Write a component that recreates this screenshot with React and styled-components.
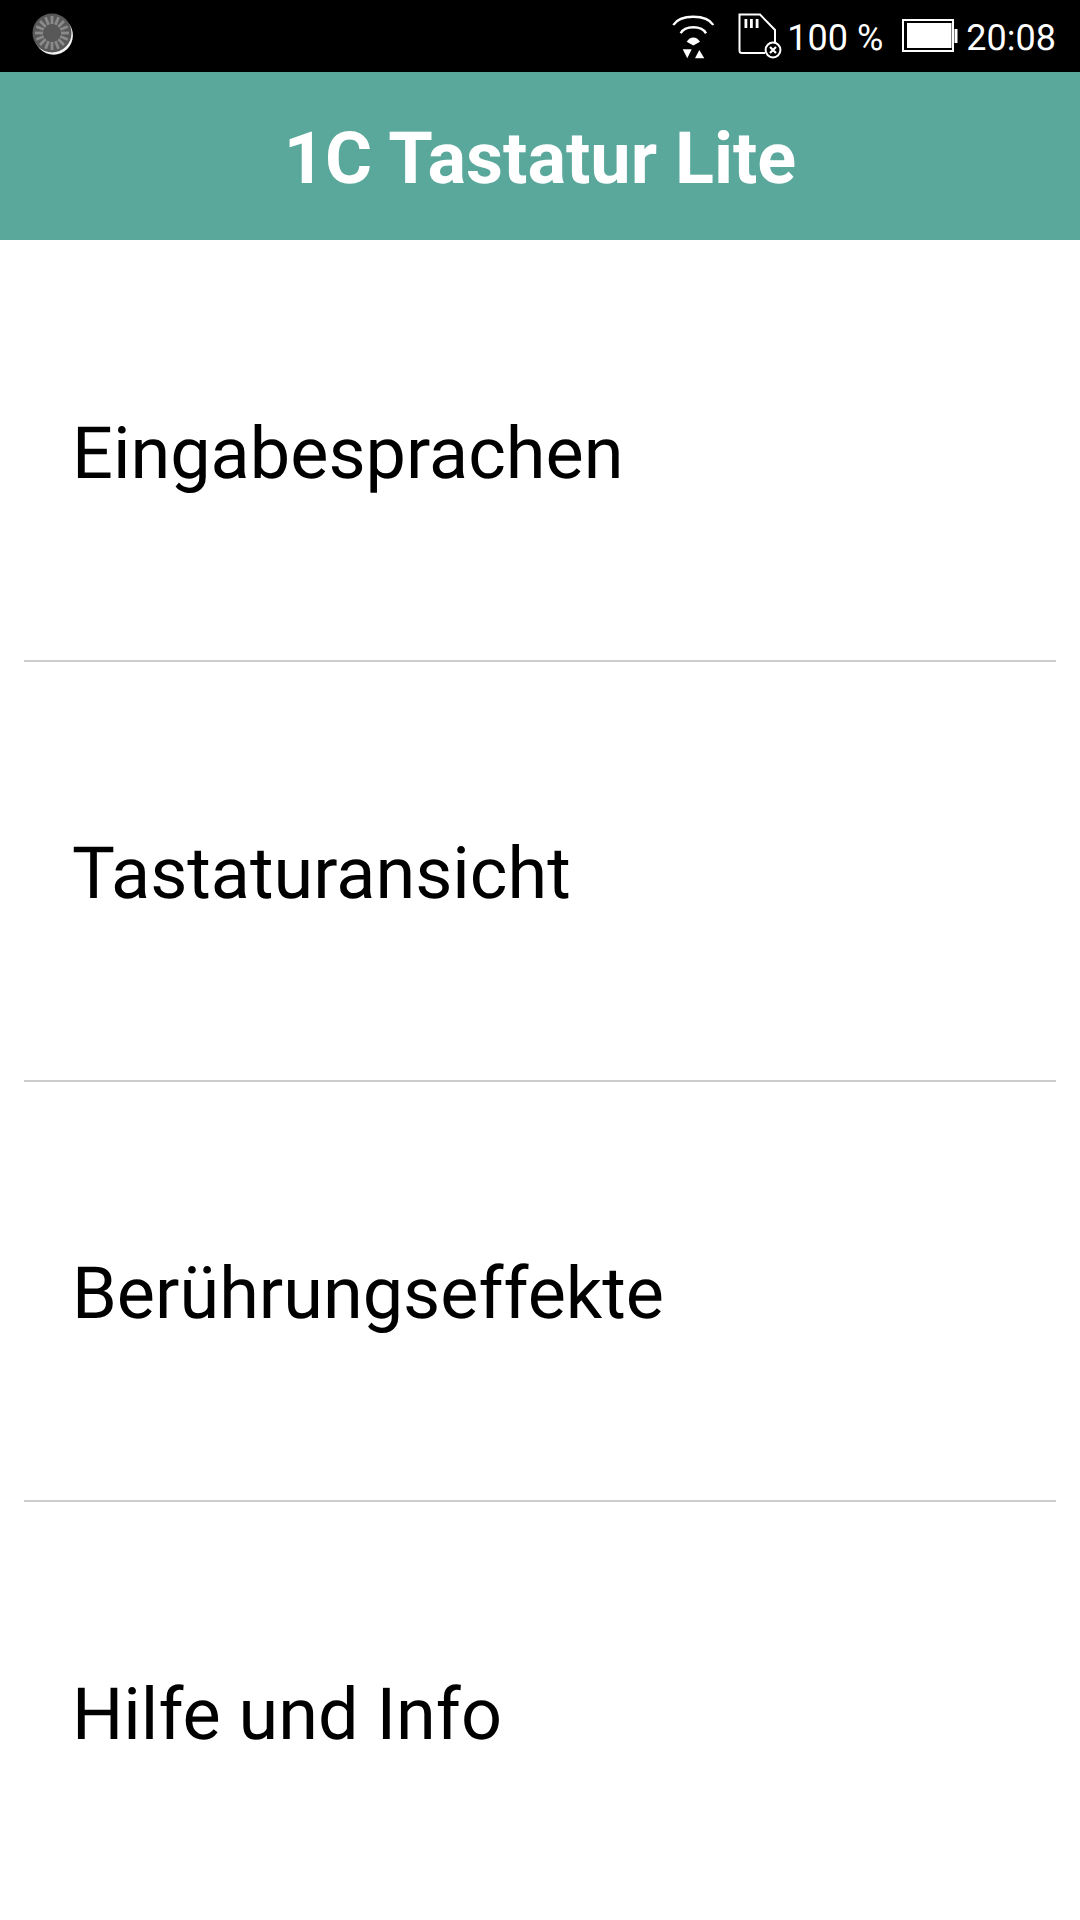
import React from 'react';
import styled, { createGlobalStyle } from 'styled-components';

const GlobalStyle = createGlobalStyle`
    html, body {
        margin: 0;
        padding: 0;
        background-color: #ffffff;
    }
    body {
        font-family: Roboto, "Noto Sans", sans-serif;
        text-rendering: geometricPrecision;
    }
`

const items = ['Eingabesprachen', 'Tastaturansicht', 'Berührungseffekte', 'Hilfe und Info'];

const LoadingIcon = () => {
    const ticks = [];
    for (let i = 0; i < 16; i++) {
        ticks.push(
            <rect key={i} x="22.6" y="7" width="2.8" height="8" fill="#8a8a8a" transform={`rotate(${i * 22.5} 24 24)`} />
        );
    }
    return (
        <svg width="52" height="52" viewBox="0 0 52 52">
            <defs>
                <filter id="soft"><feGaussianBlur stdDeviation="0.7" /></filter>
            </defs>
            <circle cx="25.6" cy="26.4" r="19.3" fill="#f4f4f4" filter="url(#soft)" />
            <circle cx="24" cy="24" r="19.5" fill="#585858" filter="url(#soft)" />
            <g filter="url(#soft)">{ticks}</g>
        </svg>
    );
}

const WifiIcon = () => (
    <svg width="44" height="46" viewBox="0 0 44 46">
        <g fill="none" stroke="#fff" strokeWidth="2.4">
            <path d="M1.3 11 C8 0 34.6 0 41.3 11" />
            <path d="M8.7 19.3 C13 11.3 29.6 11.3 34 19.3" />
        </g>
        <path d="M14.7 27.7 C18 22 24.6 22 28 27.7 L21.3 31.5 Z" fill="#fff" />
        <path d="M10.7 35.3 H19.7 L15.3 44.3 Z M27.3 36 L32.3 44.3 H23 Z" fill="#fff" />
    </svg>
);

const SdIcon = () => (
    <svg width="46" height="46" viewBox="0 0 46 46">
        <path d="M27 40 H4 Q1.5 40 1.5 37.5 V1.5 H22 L37 17 V29" fill="none" stroke="#fff" strokeWidth="2" />
        <path d="M6.5 6 h2.8 v9 h-2.8 Z M12 6 h2.8 v9 h-2.8 Z M17.7 6 h2.8 v9 h-2.8 Z" fill="#fff" />
        <circle cx="35" cy="37" r="7.4" fill="none" stroke="#fff" strokeWidth="2" />
        <path d="M32 34 L38 40 M38 34 L32 40" stroke="#fff" strokeWidth="2.2" />
    </svg>
);

const BatteryIcon = () => (
    <svg width="56" height="34" viewBox="0 0 56 34">
        <rect x="1" y="1" width="50" height="31" fill="none" stroke="#fff" strokeWidth="2" />
        <rect x="5" y="4" width="44.5" height="25" fill="#fff" />
        <rect x="52.5" y="10" width="3" height="14" fill="#fff" />
    </svg>
);

const App = () => {
    return (
        <Screen>
            <GlobalStyle />
            <StatusBar>
                <LoadingSlot><LoadingIcon /></LoadingSlot>
                <StatusRight>
                    <WifiSlot><WifiIcon /></WifiSlot>
                    <SdSlot><SdIcon /></SdSlot>
                    <StatusText>100 %</StatusText>
                    <BatterySlot><BatteryIcon /></BatterySlot>
                    <StatusText>20:08</StatusText>
                </StatusRight>
            </StatusBar>
            <Header>1C Tastatur Lite</Header>
            <List>
                {items.map((item, i) => (
                    <Row key={item} $last={i === items.length - 1}>
                        <RowLabel>{item}</RowLabel>
                    </Row>
                ))}
            </List>
        </Screen>
    )
}

const Screen = styled.div`
    width: 1080px;
    height: 1920px;
    overflow: hidden;
    display: flex;
    flex-direction: column;
    background-color: #ffffff;
`

const StatusBar = styled.div`
    height: 72px;
    background-color: #000000;
    display: flex;
    align-items: center;
    justify-content: space-between;
    padding: 0 24px 0 28px;
    flex-shrink: 0;
`

const LoadingSlot = styled.div`
    display: flex;
    margin-top: -2px;
`

const StatusRight = styled.div`
    display: flex;
    align-items: center;
`

const WifiSlot = styled.div`
    display: flex;
    margin-right: 22px;
    margin-top: 2px;
`

const SdSlot = styled.div`
    display: flex;
    margin-right: 3px;
`

const BatterySlot = styled.div`
    display: flex;
    margin-left: 19px;
    margin-right: 8px;
`

const StatusText = styled.span`
    color: #ffffff;
    font-size: 36px;
    line-height: 72px;
    padding-top: 4px;
    white-space: nowrap;
`

const Header = styled.div`
    height: 168px;
    padding-top: 5px;
    box-sizing: border-box;
    background-color: #5aa89c;
    color: #ffffff;
    font-size: 72px;
    font-weight: 700;
    display: flex;
    align-items: center;
    justify-content: center;
    flex-shrink: 0;
`

const List = styled.div`
    display: flex;
    flex-direction: column;
    padding-top: 2px;
`

const Row = styled.div`
    height: 420px;
    box-sizing: border-box;
    flex-shrink: 0;
    margin: 0 24px;
    padding: 4px 0 0 48px;
    display: flex;
    align-items: center;
    border-bottom: ${props => props.$last ? 'none' : '2px solid #cccccc'};
`

const RowLabel = styled.div`
    color: #000000;
    font-size: 72px;
`

export default App
